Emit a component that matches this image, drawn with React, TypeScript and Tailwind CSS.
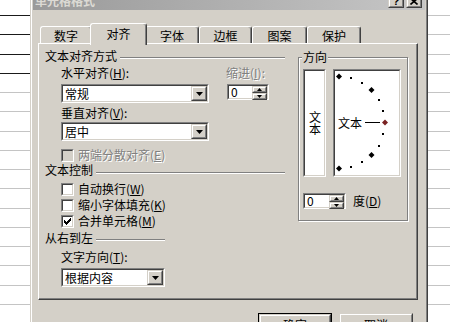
import React from "react";

const ROW_COUNT = 16;

function GridStrip({ darkCount }: { darkCount: number }) {
  const rows: React.ReactNode[] = [];
  rows.push(
    <div
      key="r0"
      className={
        darkCount > 0
          ? "h-[16px] shrink-0 border-b border-b-[#1a1a1a]"
          : "h-[16px] shrink-0 border-b border-b-[#c4c4c4]"
      }
    />
  );
  for (let i = 1; i < ROW_COUNT; i++) {
    rows.push(
      <div
        key={"r" + i}
        className={
          i < darkCount
            ? "h-[19.25px] shrink-0 border-b border-b-[#1a1a1a]"
            : "h-[19.25px] shrink-0 border-b border-b-[#c4c4c4]"
        }
      />
    );
  }
  return <>{rows}</>;
}

function Sunken({
  className,
  innerClassName,
  children,
}: {
  className: string;
  innerClassName?: string;
  children?: React.ReactNode;
}) {
  return (
    <div
      className={
        "border border-t-[#808080] border-l-[#808080] border-b-white border-r-white " +
        className
      }
    >
      <div
        className={
          "w-full h-full border border-t-[#404040] border-l-[#404040] border-b-[#d4d0c8] border-r-[#d4d0c8] " +
          (innerClassName ?? "bg-white")
        }
      >
        {children}
      </div>
    </div>
  );
}

function Raised({
  className,
  children,
}: {
  className: string;
  children?: React.ReactNode;
}) {
  return (
    <div
      className={
        "border border-t-[#d4d0c8] border-l-[#d4d0c8] border-b-[#404040] border-r-[#404040] bg-[#d4d0c8] " +
        className
      }
    >
      <div className="w-full h-full border border-t-white border-l-white border-b-[#808080] border-r-[#808080] flex items-center justify-center">
        {children}
      </div>
    </div>
  );
}

function Combo({ text, width }: { text: string; width: string }) {
  return (
    <Sunken className={width + " h-[19px]"}>
      <div className="flex h-full items-center">
        <span className="pl-[2px] flex-1">{text}</span>
        <Raised className="w-[16px] h-full">
          <svg width="7" height="4" viewBox="0 0 7 4">
            <polygon points="0,0 7,0 3.5,4" fill="#000" />
          </svg>
        </Raised>
      </div>
    </Sunken>
  );
}

function Spin({ width }: { width: string }) {
  return (
    <Sunken className={width + " h-[16px]"}>
      <div className="flex h-full items-center">
        <span className="pl-[2px] flex-1">0</span>
        <div className="w-[15px] h-full flex flex-col">
          <Raised className="w-full flex-1">
            <svg width="5" height="3" viewBox="0 0 5 3">
              <polygon points="2.5,0 5,3 0,3" fill="#000" />
            </svg>
          </Raised>
          <Raised className="w-full flex-1">
            <svg width="5" height="3" viewBox="0 0 5 3">
              <polygon points="0,0 5,0 2.5,3" fill="#000" />
            </svg>
          </Raised>
        </div>
      </div>
    </Sunken>
  );
}

function CheckBox({ checked, disabled }: { checked?: boolean; disabled?: boolean }) {
  const cols = [2, 3, 4, 3, 2, 1, 0];
  return (
    <Sunken
      className="w-[13px] h-[13px] shrink-0"
      innerClassName={disabled ? "bg-[#d4d0c8]" : "bg-white"}
    >
      {checked && (
        <svg width="9" height="9" viewBox="0 0 9 9" className="block">
          {cols.map((r, i) => (
            <rect key={i} x={1 + i} y={1 + r} width="1" height="3" fill="#000" />
          ))}
        </svg>
      )}
    </Sunken>
  );
}

function Header({ text, lineMt }: { text: string; lineMt: string }) {
  return (
    <div className="h-[16px] flex items-center">
      <span>{text}</span>
      <div
        className={
          "flex-1 ml-[3px] self-start h-[2px] border-t border-t-[#808080] border-b border-b-white " +
          lineMt
        }
      />
    </div>
  );
}

const disabledText = "text-[#808080] [text-shadow:1px_1px_0_#ffffff]";

function Orientation() {
  const items: React.ReactNode[] = [];
  for (let i = 0; i <= 12; i++) {
    const a = ((90 - i * 15) * Math.PI) / 180;
    const x = 6 + 46 * Math.cos(a);
    const y = 53.5 - 46 * Math.sin(a);
    if (i % 3 === 0) {
      const c = i === 6 ? "#7a2222" : "#000";
      items.push(
        <polygon
          key={i}
          points={`${x},${y - 3} ${x + 3},${y} ${x},${y + 3} ${x - 3},${y}`}
          fill={c}
        />
      );
    } else {
      items.push(
        <rect key={i} x={Math.round(x) - 1} y={Math.round(y) - 1} width="2" height="2" fill="#000" />
      );
    }
  }
  return (
    <Sunken className="relative w-[68px] h-[108px] ml-[7px]">
      <div className="relative w-full h-full flex items-center pl-[3px]">
        <span>文本</span>
        <svg
          className="absolute left-[-2px] top-[-2px]"
          width="68"
          height="108"
          viewBox="0 0 68 108"
        >
          <line x1="32" y1="53.5" x2="47" y2="53.5" stroke="#000" strokeWidth="1" />
          {items}
        </svg>
      </div>
    </Sunken>
  );
}

function Tab({
  label,
  width,
  selected,
}: {
  label: string;
  width: string;
  selected?: boolean;
}) {
  if (selected) {
    return (
      <div
        className={
          "relative z-10 h-[22px] -mb-[2px] -mx-[2px] bg-[#d4d0c8] border-t border-l border-t-white border-l-white border-r border-r-[#404040] shadow-[inset_-1px_0_0_#808080] rounded-tl-[3px] rounded-tr-[3px] flex justify-center pt-[4px] " +
          width
        }
      >
        {label}
      </div>
    );
  }
  return (
    <div
      className={
        "h-[17px] bg-[#d4d0c8] border-t border-l border-t-white border-l-white border-r border-r-[#404040] shadow-[inset_-1px_0_0_#808080] rounded-tl-[3px] rounded-tr-[3px] flex justify-center pt-[3px] " +
        width
      }
    >
      {label}
    </div>
  );
}

function Dialog() {
  return (
    <div className="w-[398px] shrink-0 h-[360px] -mt-[11px] bg-[#d4d0c8] border border-t-[#d4d0c8] border-l-[#d4d0c8] border-r-[#404040] border-b-[#404040]">
      <div className="h-full border border-t-white border-l-white border-r-[#808080] border-b-[#808080] p-[1px] flex flex-col">
        {/* title bar */}
        <div className="h-[18px] shrink-0 flex items-center bg-linear-to-r from-[#9a9a9a] to-[#c6c6c6] pl-[2px] pr-[3px]">
          <span className="font-bold text-[#dcdad4]">单元格格式</span>
          <div className="ml-auto flex gap-[2px]">
            <Raised className="w-[16px] h-[14px]">
              <span className="font-bold text-[11px] leading-none font-['Liberation_Sans',sans-serif]">?</span>
            </Raised>
            <Raised className="w-[16px] h-[14px]">
              <svg width="8" height="7" viewBox="0 0 8 7">
                <path d="M0.5 0.5 L7.5 6.5 M7.5 0.5 L0.5 6.5" stroke="#000" strokeWidth="1.6" />
              </svg>
            </Raised>
          </div>
        </div>

        {/* client */}
        <div className="pl-[5px] pt-[13px] flex flex-col">
          {/* tabs */}
          <div className="h-[20px] flex items-end pl-[2px]">
            <Tab label="数字" width="w-[52px]" />
            <Tab label="对齐" width="w-[57px]" selected />
            <Tab label="字体" width="w-[54px]" />
            <Tab label="边框" width="w-[53px]" />
            <Tab label="图案" width="w-[55px]" />
            <Tab label="保护" width="w-[54px]" />
          </div>

          {/* panel */}
          <div className="w-[380px] h-[257px] border-t border-l border-t-white border-l-white border-r border-b border-r-[#404040] border-b-[#404040]">
            <div className="h-full border-r border-b border-r-[#808080] border-b-[#808080] flex pl-[6px] pt-[2px]">
              {/* left column */}
              <div className="w-[240px] flex flex-col">
                <div className="mt-[2px]">
                  <Header text="文本对齐方式" lineMt="mt-[9px]" />
                </div>
                <div className="h-[14px] mt-[2px] flex items-center pl-[16px]">
                  <span className="w-[165px]">
                    水平对齐(<u>H</u>):
                  </span>
                  <span className={disabledText}>
                    缩进(<u>I</u>):
                  </span>
                </div>
                <div className="mt-[4px] flex items-start pl-[16px]">
                  <Combo text="常规" width="w-[148px]" />
                  <div className="ml-[18px]">
                    <Spin width="w-[42px]" />
                  </div>
                </div>
                <div className="h-[14px] mt-[3px] flex items-center pl-[16px]">
                  <span>
                    垂直对齐(<u>V</u>):
                  </span>
                </div>
                <div className="mt-[2px] pl-[16px]">
                  <Combo text="居中" width="w-[148px]" />
                </div>
                <div className="h-[14px] mt-[7px] flex items-center pl-[16px] gap-[4px]">
                  <CheckBox disabled />
                  <span className={disabledText}>
                    两端分散对齐(<u>E</u>)
                  </span>
                </div>
                <Header text="文本控制" lineMt="mt-[10px]" />
                <div className="h-[14px] mt-[4px] flex items-center pl-[16px] gap-[4px]">
                  <CheckBox />
                  <span>
                    自动换行(<u>W</u>)
                  </span>
                </div>
                <div className="h-[14px] mt-[2px] flex items-center pl-[16px] gap-[4px]">
                  <CheckBox />
                  <span>
                    缩小字体填充(<u>K</u>)
                  </span>
                </div>
                <div className="h-[14px] mt-[2px] flex items-center pl-[16px] gap-[4px]">
                  <CheckBox checked />
                  <span>
                    合并单元格(<u>M</u>)
                  </span>
                </div>
                <div className="mt-[2px] w-[120px]">
                  <Header text="从右到左" lineMt="mt-[9px]" />
                </div>
                <div className="h-[14px] mt-[4px] flex items-center pl-[16px]">
                  <span>
                    文字方向(<u>T</u>):
                  </span>
                </div>
                <div className="mt-[4px] pl-[16px]">
                  <Combo text="根据内容" width="w-[104px]" />
                </div>
              </div>

              {/* right column */}
              <div className="ml-[13px] mt-[11px]">
                <div className="relative w-[110px] h-[164px] border border-[#808080] shadow-[inset_1px_1px_0_#ffffff,1px_1px_0_#ffffff] pl-[4px] pt-[11px]">
                  <span className="absolute left-[3px] -top-[7px] px-[1px] bg-[#d4d0c8]">
                    方向
                  </span>
                  <div className="flex">
                    <Sunken className="w-[23px] h-[108px]">
                      <div className="h-full flex items-center justify-center pb-[1px]">
                        <span className="[writing-mode:vertical-rl] [text-orientation:upright] leading-[12px]">
                          文本
                        </span>
                      </div>
                    </Sunken>
                    <Orientation />
                  </div>
                  <div className="mt-[16px] flex items-center">
                    <Spin width="w-[43px]" />
                    <span className="ml-[7px]">
                      度(<u>D</u>)
                    </span>
                  </div>
                </div>
              </div>
            </div>
          </div>

          {/* buttons */}
          <div className="mt-[13px] flex justify-end gap-[7px] pr-[12px]">
            <div className="w-[74px] h-[23px] border border-black">
              <Raised className="w-full h-full">
                <span>确定</span>
              </Raised>
            </div>
            <Raised className="w-[74px] h-[23px]">
              <span>取消</span>
            </Raised>
          </div>
        </div>
      </div>
    </div>
  );
}

export default function App() {
  return (
    <div className="w-[450px] h-[322px] overflow-hidden flex bg-white text-[12px] leading-none text-black font-['Noto_Sans_CJK_SC',sans-serif]">
      <div className="w-[30px] shrink-0 flex flex-col">
        <GridStrip darkCount={4} />
      </div>
      <Dialog />
      <div className="flex-1 flex flex-col">
        <GridStrip darkCount={0} />
      </div>
    </div>
  );
}
